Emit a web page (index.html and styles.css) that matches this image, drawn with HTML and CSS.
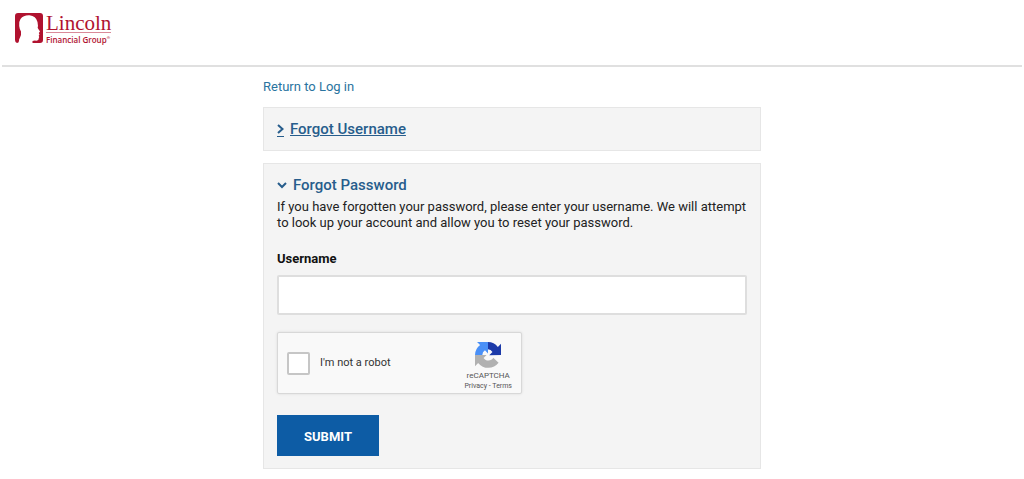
FILE: index.html
```html
<!DOCTYPE html>
<html lang="en">

<head>
  <meta charset="UTF-8">
  <meta name="viewport" content="width=device-width, initial-scale=1">
  <title>Forgot Password</title>
  <link rel="stylesheet" href="styles.css">
</head>

<body>
  <header class="header">
    <a class="logo" href="#">
      <svg class="logo-mark" viewBox="0 0 28 30" aria-hidden="true">
        <path fill="#b0122f" d="M3 0H25Q28 0 28 3V27Q28 30 25 30H17.500L17.500 28Q19 27.200 21.500 27.700Q24 27.500 23.700 25.500L24.200 24L23.700 22.800L24.500 21.500L23.800 20L25 18.500L23 15.500Q22.300 14.500 23 13L22.500 9Q21 3 14.500 2.300Q8.500 2 5.500 6Q3.500 9 4.200 13Q4.500 16 6 18.500Q6.500 22 5 24.500Q3.700 26.500 4 28Q3.800 30 2 30Q0 29.500 0 27V3Q0 0 3 0Z"/>
      </svg>
      <span class="logo-text">
        <span class="logo-name">Lincoln</span>
        <span class="logo-sub">Financial Group<sup>®</sup></span>
      </span>
    </a>
  </header>

  <main class="content">
    <a class="return" href="#">Return to Log in</a>

    <section class="panel">
      <h2 class="panel-title">
        <a class="panel-link" href="#">
          <svg class="chevron-right" viewBox="0 0 7 14" aria-hidden="true">
            <path d="M1 3L5.500 7L1 11"/>
          </svg>
          <span>Forgot Username</span>
        </a>
      </h2>
    </section>

    <section class="panel">
      <h2 class="panel-title">
        <svg class="chevron-down" viewBox="0 0 10 8" aria-hidden="true">
          <path d="M1 2L5 6L9 2"/>
        </svg>
        <span>Forgot Password</span>
      </h2>
      <p class="hint">If you have forgotten your password, please enter your username. We will attempt to look up your account and allow you to reset your password.</p>

      <form>
        <label class="label" for="username">Username</label>
        <input class="field" type="text" id="username">

        <div class="captcha">
          <input class="captcha-box" type="checkbox" id="robot">
          <label class="captcha-label" for="robot">I'm not a robot</label>
          <div class="captcha-brand">
            <svg class="captcha-logo" viewBox="0 0 64 64" aria-hidden="true">
              <path fill="#1c3aa9" d="M64 32V4.500L56.300 12.200A32 32 0 0 0 32 0V18A14 14 0 0 1 43 24.500L35 32.500Z"/>
              <path fill="#4a90f7" d="M32 0H5L12.500 7.500A32 32 0 0 0 0 32H18A14 14 0 0 1 24.500 20.500L32 28.500Z"/>
              <path fill="#b1b1b1" d="M0 32V59.500L7.700 51.800A32 32 0 0 0 58 51L45 38.500A14 14 0 0 1 21 39.500L28.500 32Z"/>
            </svg>
            <span class="captcha-name">reCAPTCHA</span>
            <span class="captcha-links"><a href="#">Privacy</a> - <a href="#">Terms</a></span>
          </div>
        </div>

        <button class="submit" type="submit">SUBMIT</button>
      </form>
    </section>
  </main>
</body>

</html>
```

FILE: styles.css
```css
* {
  box-sizing: border-box;
}

body {
  margin: 0;
  background: #fff;
  color: #222;
  font-family: Roboto, "Liberation Sans", sans-serif;
  font-size: 13px;
  line-height: 16px;
}

a {
  text-decoration: none;
}

/* header */

.header {
  margin: 0 2px;
  padding: 13px 13px 19px;
  border-bottom: 2px solid #e0e0e0;
}

.logo {
  display: inline-flex;
  gap: 3px;
  color: #b0122f;
  vertical-align: top;
}

.logo-mark {
  width: 28px;
  height: 30px;
}

.logo-text {
  display: flex;
  flex-direction: column;
}

.logo-name {
  height: 20px;
  border-bottom: 1px solid #d98a99;
  font-family: "Liberation Serif", serif;
  font-size: 21px;
  line-height: 20px;
}

.logo-sub {
  font-family: "Open Sans", sans-serif;
  font-size: 8px;
  font-weight: 600;
  line-height: 13px;
}

.logo-sub sup {
  font-size: 4px;
  line-height: 4px;
}

/* content */

.content {
  max-width: 498px;
  margin: 0 auto;
  padding: 12px 0 10px;
}

.return {
  display: block;
  margin-bottom: 12px;
  color: #2a74a0;
}

.panel {
  margin-bottom: 12px;
  padding: 12px 13px;
  background: #f4f4f4;
  border: 1px solid #e6e6e6;
}

.panel-title {
  display: flex;
  align-items: center;
  gap: 6px;
  margin: 0;
  color: #275d8c;
  font-size: 15px;
  font-weight: 500;
  line-height: 18px;
}

.panel-link {
  display: flex;
  align-items: center;
  gap: 6px;
  color: inherit;
}

.panel-link span {
  text-decoration: underline;
}

.chevron-right,
.chevron-down {
  fill: none;
  stroke: #275d8c;
  stroke-width: 2;
}

.chevron-right {
  width: 7px;
  height: 15px;
  border-bottom: 1px solid #275d8c;
}

.chevron-down {
  width: 10px;
  height: 8px;
}

.hint {
  margin: 5px 0 20px;
}

.label {
  display: block;
  margin-bottom: 8px;
  color: #111;
  font-weight: 700;
}

.field {
  display: block;
  width: 100%;
  height: 40px;
  padding: 0 10px;
  border: 2px solid #dedede;
  border-radius: 2px;
  background: #fff;
  font: inherit;
}

/* captcha */

.captcha {
  display: flex;
  align-items: center;
  max-width: 245px;
  height: 62px;
  margin: 17px 0 21px;
  padding: 0 9px;
  background: #f9f9f9;
  border: 1px solid #d8d8d8;
  border-radius: 2px;
  box-shadow: 0 0 3px rgba(0, 0, 0, 0.1);
}

.captcha-box {
  width: 23px;
  height: 23px;
  margin: 0 10px 0 0;
  appearance: none;
  background: #fff;
  border: 2px solid #c6c6c6;
  border-radius: 2px;
}

.captcha-label {
  font-size: 11px;
  color: #333;
}

.captcha-brand {
  display: flex;
  flex-direction: column;
  align-items: center;
  margin-left: auto;
  padding-top: 4px;
  color: #555;
}

.captcha-logo {
  width: 26px;
  height: 26px;
  margin: 2px 0 3px;
}

.captcha-name {
  font-size: 8px;
  line-height: 10px;
}

.captcha-links {
  font-size: 7px;
  line-height: 10px;
}

.captcha-links a {
  color: inherit;
}

.submit {
  display: block;
  width: 102px;
  height: 41px;
  padding: 2px 0 0;
  background: #0d5ca5;
  border: 0;
  color: #fff;
  font: inherit;
  font-weight: 700;
}
```
